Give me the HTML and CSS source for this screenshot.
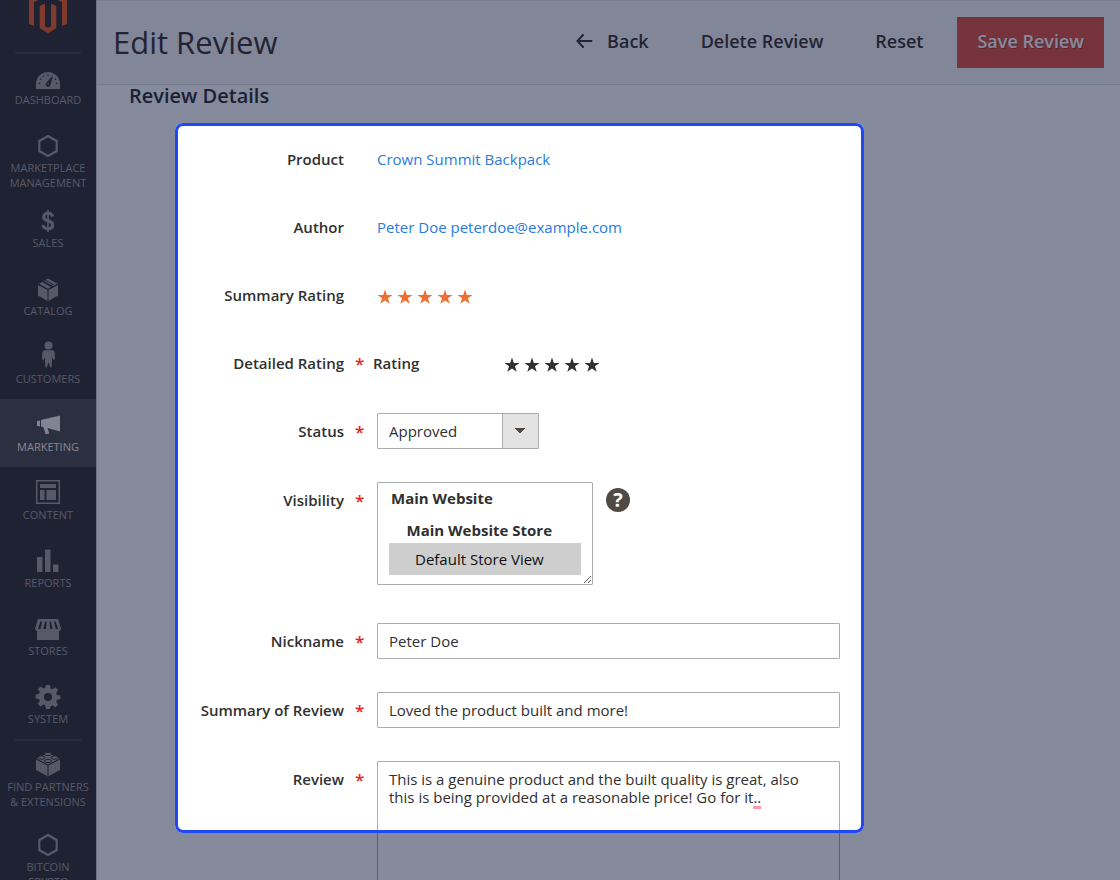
FILE: index.html
```html
<!DOCTYPE html>
<html lang="en">
<head>
    <meta charset="UTF-8">
    <meta name="viewport" content="width=device-width, initial-scale=1.0">
    <title>Edit Review</title>
    <link rel="stylesheet" href="styles.css">
</head>
<body>
    <svg class="sprite" aria-hidden="true">
        <symbol id="star" viewBox="0 0 16 16"><path d="M8 .6l1.8 5.3h5.7l-4.6 3.4 1.8 5.5L8 11.5l-4.7 3.3 1.8-5.5L.5 5.9h5.7z"/></symbol>
        <symbol id="hexagon" viewBox="0 0 28 28"><path d="M14 4l8.700 5v10L14 24l-8.700-5V9z" fill="none" stroke="currentColor" stroke-width="2.2"/></symbol>
    </svg>

    <nav class="sidebar">
        <a href="#" class="logo" aria-label="Home">
            <svg viewBox="0 0 38 46" width="38" height="46"><path d="M19 0L0 11v25l5 2V14.200L19 6.400l14 7.800V38l5-2V11zM22 38q-3 3-6 0V15.500L10.700 18v22L19 45.500l8.300-5.500V18L22 15.500z"/></svg>
        </a>
        <ul class="menu">
            <li class="menu-item divided">
                <a href="#">
                    <svg viewBox="0 -2 28 28"><path d="M2 23v-5a12 12 0 0 1 24 0v5z"/><g class="cut"><circle cx="5.500" cy="17.500" r=".8"/><circle cx="6.500" cy="13.300" r=".8"/><circle cx="9.500" cy="10.200" r=".8"/><circle cx="14" cy="9" r=".8"/><circle cx="21.500" cy="13.300" r=".8"/><circle cx="22.500" cy="17.500" r=".8"/><path d="M19 9.500l-2.500 9a2.400 2.400 0 1 1-4-2z"/></g><circle cx="14.200" cy="18" r=".8"/></svg>
                    <span>DASHBOARD</span>
                </a>
            </li>
            <li class="menu-item">
                <a href="#">
                    <svg viewBox="0 0 28 28"><use href="#hexagon"/></svg>
                    <span>MARKETPLACE MANAGEMENT</span>
                </a>
            </li>
            <li class="menu-item">
                <a href="#">
                    <svg viewBox="0 0 28 28"><path d="M18.700 9.500C18 7.300 16.300 6.300 14 6.300s-4.300 1.100-4.300 3.600c0 5.200 9 2.600 9 7.900 0 2.700-2 4-4.700 4s-4.700-1.200-5.100-3.900" fill="none" stroke="currentColor" stroke-width="3"/><path d="M13.200 3h1.600v22h-1.600z"/></svg>
                    <span>SALES</span>
                </a>
            </li>
            <li class="menu-item">
                <a href="#">
                    <svg viewBox="0 0 28 28"><path d="M4 10l9.500 5v11L4 20.500zM14.500 15L24 10v10.500L14.500 26zM5 8.800L8.300 7l8.700 5-3 1.700zM9.800 6L14 3.500l9.500 5.300-4.500 2.300z"/><path class="cut" d="M11.500 4.800l8.800 4.900-.9.500-8.800-4.900z"/></svg>
                    <span>CATALOG</span>
                </a>
            </li>
            <li class="menu-item">
                <a href="#">
                    <svg viewBox="0 2 28 28"><circle cx="14.500" cy="4.500" r="4"/><path d="M11 9.200h7q2.500 0 2.700 3l.3 6-1.500.8-1.200-3-.8 10.500h-1.200L14.500 21l-1.800 5.500h-1.200l-.8-10.500-1.200 3L8 18.200l.3-6q.2-3 2.700-3z"/></svg>
                    <span>CUSTOMERS</span>
                </a>
            </li>
            <li class="menu-item active">
                <a href="#">
                    <svg viewBox="0 0 28 28"><path d="M3 10l3-.6v6L3 14.800zM7 9l19-4.500v16L13.500 17l1.700 5.500-3.500.8L9.300 16 7 15.500z"/></svg>
                    <span>MARKETING</span>
                </a>
            </li>
            <li class="menu-item">
                <a href="#">
                    <svg viewBox="0 1 28 28"><path d="M2 2h24v24H2zm1.500 1.500v21h21v-21z" fill-rule="evenodd"/><path d="M6 6h16v4H6zM6 12h4.500v10H6zM12.500 12H22v10h-9.500z"/></svg>
                    <span>CONTENT</span>
                </a>
            </li>
            <li class="menu-item">
                <a href="#">
                    <svg viewBox="0 1 28 28"><path d="M3 11h5.500v15H3zM11 3.500h5.500V26H11zM19 18.500h5.500V26H19z"/></svg>
                    <span>REPORTS</span>
                </a>
            </li>
            <li class="menu-item">
                <a href="#">
                    <svg viewBox="0 0 28 28"><path d="M4 4h20l3 9.500q-.5 2.500-2 2.500v9H3v-9q-1.500 0-2-2.500z"/><path class="cut" d="M6.300 6.500h2L6.500 14H4zM11 6.500h1.700L12 14H9.300zM15.500 6.500H17l1.500 7.500h-2.400zM20 6.500h1.700l2.500 7.500h-2.400z"/></svg>
                    <span>STORES</span>
                </a>
            </li>
            <li class="menu-item">
                <a href="#">
                    <svg viewBox="0 0 28 28"><path fill-rule="evenodd" d="M12 2h4l.6 3.400 2 .8 2.800-2 2.800 2.800-2 2.900.8 2 3.400.5v3.800l-3.400.6-.8 2 2 2.800-2.800 2.800-2.800-2-2 .8L16 26h-4l-.6-3.600-2-.8-2.800 2-2.800-2.800 2-2.800-.8-2-3.400-.6v-3.800l3.400-.5.8-2-2-2.900 2.800-2.800 2.800 2 2-.8zM14 10a4 4 0 1 0 0 8 4 4 0 0 0 0-8z"/></svg>
                    <span>SYSTEM</span>
                </a>
            </li>
            <li class="menu-item divided partners">
                <a href="#">
                    <svg viewBox="0 1 28 28"><path d="M2 9.500l11.500 6v10.700L2 20zM14.500 15.500l11.500-6V20l-11.500 6.200zM2.500 8.500L14 3l11.500 5.500L14 14.500z"/><g class="brick"><ellipse cx="14" cy="4" rx="3.500" ry="1.700"/><ellipse cx="7.500" cy="7.500" rx="3.500" ry="1.700"/><ellipse cx="20.500" cy="7.500" rx="3.500" ry="1.700"/><ellipse cx="14" cy="11" rx="3.500" ry="1.700"/></g></svg>
                    <span>FIND PARTNERS &amp; EXTENSIONS</span>
                </a>
            </li>
            <li class="menu-item">
                <a href="#">
                    <svg viewBox="0 0 28 28"><use href="#hexagon"/></svg>
                    <span>BITCOIN<br>CRYPTO</span>
                </a>
            </li>
        </ul>
    </nav>

    <main class="page">
        <header class="page-header">
            <h1>Edit Review</h1>
            <div class="actions">
                <button type="button" class="btn">
                    <svg width="17" height="14" viewBox="0 0 17 14"><path d="M7 1L1.500 7 7 13M2 7h13.500" fill="none" stroke="currentColor" stroke-width="2" stroke-linecap="round"/></svg>
                    Back
                </button>
                <button type="button" class="btn">Delete Review</button>
                <button type="button" class="btn">Reset</button>
                <button type="submit" form="reviewForm" class="btn btn-primary">Save Review</button>
            </div>
        </header>

        <form id="reviewForm" class="review-form">
            <h2>Review Details</h2>
            <div class="field text-row">
                <span class="label">Product</span>
                <div><a href="#">Crown Summit Backpack</a></div>
            </div>
            <div class="field text-row">
                <span class="label">Author</span>
                <div><a href="#">Peter Doe</a> <a href="mailto:peterdoe@example.com">peterdoe@example.com</a></div>
            </div>
            <div class="field text-row">
                <span class="label">Summary Rating</span>
                <div class="stars summary" role="img" aria-label="5 out of 5">
                    <svg><use href="#star"/></svg>
                    <svg><use href="#star"/></svg>
                    <svg><use href="#star"/></svg>
                    <svg><use href="#star"/></svg>
                    <svg><use href="#star"/></svg>
                </div>
            </div>
            <div class="field text-row">
                <span class="label required">Detailed Rating</span>
                <div class="detailed">
                    <span class="rating-name">Rating</span>
                    <div class="stars">
                        <label><input type="radio" name="rating" value="1" aria-label="1 star"><svg><use href="#star"/></svg></label>
                        <label><input type="radio" name="rating" value="2" aria-label="2 stars"><svg><use href="#star"/></svg></label>
                        <label><input type="radio" name="rating" value="3" aria-label="3 stars"><svg><use href="#star"/></svg></label>
                        <label><input type="radio" name="rating" value="4" aria-label="4 stars"><svg><use href="#star"/></svg></label>
                        <label><input type="radio" name="rating" value="5" aria-label="5 stars" checked><svg><use href="#star"/></svg></label>
                    </div>
                </div>
            </div>
            <div class="field">
                <label class="label required" for="status">Status</label>
                <div>
                    <select id="status" class="status">
                        <option>Approved</option>
                        <option>Pending</option>
                        <option>Not Approved</option>
                    </select>
                </div>
            </div>
            <div class="field visibility-row">
                <label class="label required" for="visibility">Visibility</label>
                <div class="visibility">
                    <select id="visibility" multiple>
                        <optgroup label="Main Website"></optgroup>
                        <optgroup label="&nbsp;&nbsp;&nbsp;&nbsp;Main Website Store">
                            <option selected>Default Store View</option>
                        </optgroup>
                    </select>
                    <button type="button" class="help" aria-label="Help">?</button>
                </div>
            </div>
            <div class="field">
                <label class="label required" for="nickname">Nickname</label>
                <input type="text" id="nickname" value="Peter Doe">
            </div>
            <div class="field">
                <label class="label required" for="title">Summary of Review</label>
                <input type="text" id="title" value="Loved the product built and more!">
            </div>
            <div class="field">
                <label class="label required" for="detail">Review</label>
                <div class="review-text">
                    <textarea id="detail" spellcheck="false">This is a genuine product and the built quality is great, also this is being provided at a reasonable price! Go for it..</textarea>
                    <i class="typo"></i>
                </div>
            </div>
            <div class="spotlight"></div>
        </form>
    </main>
</body>
</html>
```
FILE: styles.css
```css
* {
    box-sizing: border-box;
}

html {
    overflow: hidden;
}

body {
    margin: 0;
    height: 100vh;
    overflow: hidden;
    display: flex;
    font-family: 'Open Sans', 'Noto Sans', sans-serif;
    font-size: 15px;
    color: #303030;
    background: #fff;
}

.sprite {
    position: absolute;
    width: 0;
    height: 0;
}

a {
    color: #2a7bdc;
    text-decoration: none;
}

/* Sidebar */
.sidebar {
    flex: none;
    width: 97px;
    height: 100vh;
    overflow: hidden;
    background: #373330;
    border-right: 1px solid #d0d0d0;
}

.logo {
    display: flex;
    justify-content: center;
    align-items: flex-end;
    height: 52px;
    margin-top: -18px;
}

.logo svg {
    fill: #f26322;
}

.menu {
    list-style: none;
    margin: 18px 0 0;
    padding: 0;
}

.menu-item {
    position: relative;
    min-height: 68px;
    padding: 12px 4px 5px;
}

.menu-item a {
    display: flex;
    flex-direction: column;
    align-items: center;
    color: #a79d95;
    font-size: 11px;
    line-height: 15px;
    text-align: center;
}

.menu-item svg {
    width: 28px;
    height: 28px;
    fill: currentColor;
    overflow: visible;
}

.menu-item .cut {
    fill: #373330;
}

.menu-item .brick {
    stroke: #373330;
    stroke-width: 1;
}

.menu-item.active {
    background: #524d49;
}

.menu-item.active a {
    color: #f7f3eb;
}

.menu-item.divided::before {
    content: '';
    position: absolute;
    top: 0;
    left: 15px;
    right: 15px;
    height: 2px;
    background: #4d4845;
}

.menu-item.partners {
    padding-bottom: 10px;
}

/* Header */
.page {
    flex: 1;
    min-width: 0;
}

.page-header {
    display: flex;
    justify-content: space-between;
    align-items: center;
    height: 85px;
    padding: 0 16px;
    background: #f8f8f8;
    border-top: 1px solid #e3e3e3;
    border-bottom: 1px solid #e3e3e3;
}

h1 {
    margin: 0;
    padding-bottom: 2px;
    font-size: 31px;
    font-weight: 400;
    color: #41362f;
}

.actions {
    display: flex;
    align-items: center;
}

.btn {
    display: flex;
    align-items: center;
    gap: 14px;
    height: 51px;
    padding: 0 26px 3px;
    border: 0;
    background: none;
    font: 600 18px 'Open Sans', sans-serif;
    color: #41362f;
    cursor: pointer;
}

.btn-primary {
    margin-left: 8px;
    padding: 0 20px 3px;
    background: #e45540;
    color: #fff;
    text-shadow: 1px 1px 0 rgba(0, 0, 0, 0.25);
}

/* Form */
.review-form {
    position: relative;
    padding: 0 32px;
}

h2 {
    margin: 0 0 34px;
    font-size: 20px;
    line-height: 22px;
    font-weight: 600;
}

.field {
    display: grid;
    grid-template-columns: 215px minmax(0, 463px);
    column-gap: 33px;
    margin-bottom: 33px;
    line-height: 36px;
}

.text-row {
    height: 35px;
}

.label {
    position: relative;
    font-size: 15px;
    font-weight: 600;
    text-align: right;
}

.label.required::after {
    content: '*';
    position: absolute;
    left: 100%;
    margin-left: 11px;
    color: #e22626;
    font-size: 17px;
    line-height: 38px;
}

.stars {
    display: flex;
    align-items: center;
    gap: 4px;
    height: 40px;
}

.stars svg {
    display: block;
    width: 16px;
    height: 16px;
    fill: #303030;
}

.stars input {
    position: absolute;
    opacity: 0;
}

.summary svg {
    fill: #eb7031;
}

.detailed {
    display: flex;
    margin-left: -4px;
}

.rating-name {
    width: 131px;
    font-size: 15px;
    font-weight: 600;
}

input[type="text"],
select,
textarea {
    border: 1px solid #adadad;
    border-radius: 1px;
    background: #fff;
    color: #303030;
    font: 400 15px 'Open Sans', sans-serif;
}

input[type="text"] {
    width: 100%;
    height: 36px;
    padding: 0 11px;
}

.status {
    display: block;
    appearance: none;
    width: 162px;
    height: 36px;
    padding: 0 48px 0 11px;
    background: linear-gradient(#adadad, #adadad) right 35px top / 1px 100% no-repeat,
        conic-gradient(from -40deg at 50% 100%, #514943 80deg, transparent 0) right 13px center / 10px 6px no-repeat,
        linear-gradient(#e3e3e3, #e3e3e3) right / 35px 100% no-repeat;
}

.visibility-row {
    margin-bottom: 38px;
}

.visibility {
    display: flex;
    align-items: flex-start;
    gap: 13px;
}

#visibility {
    width: 216px;
    height: 103px;
    padding: 5px 11px;
    overflow: hidden;
    resize: both;
}

#visibility optgroup {
    font-weight: 700;
    line-height: 22px;
}

#visibility optgroup + optgroup {
    padding-top: 11px;
}

#visibility option {
    margin-top: 2px;
    padding: 6px 26px;
    font-weight: 400;
}

.help {
    width: 24px;
    height: 24px;
    margin-top: 6px;
    padding: 0;
    border: 0;
    border-radius: 50%;
    background: #514943;
    color: #fff;
    font: 700 20px/24px 'Open Sans', sans-serif;
}

.review-text {
    position: relative;
}

textarea {
    display: block;
    width: 100%;
    height: 240px;
    padding: 8px 11px;
    line-height: 18px;
    resize: none;
}

.typo {
    position: absolute;
    top: 45px;
    left: 376px;
    width: 8px;
    height: 3px;
    background: #f99bab;
}

/* Dims everything outside the highlighted fields */
.spotlight {
    position: absolute;
    top: 38px;
    left: 78px;
    width: 689px;
    height: 710px;
    border: 3px solid #2049f5;
    border-radius: 8px;
    box-shadow: 0 0 0 2000px rgba(6, 16, 55, 0.49);
    pointer-events: none;
}
```
